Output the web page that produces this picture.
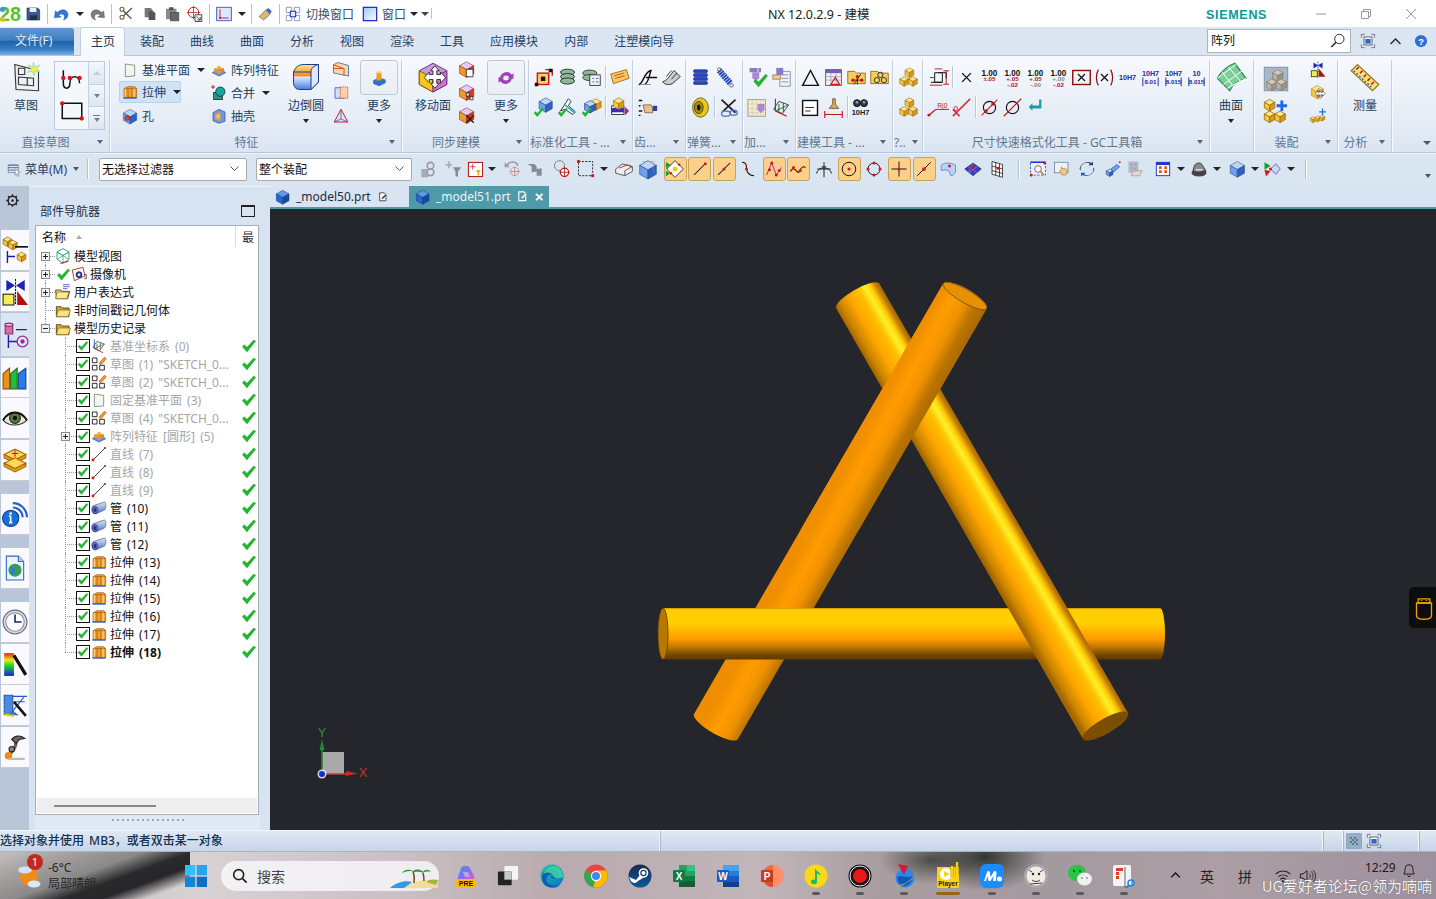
<!DOCTYPE html>
<html lang="zh">
<head>
<meta charset="utf-8">
<title>NX 12</title>
<style>
  html, body { margin: 0; height: 100%; overflow: hidden; background: #dce6f3; }
  body { font: 12px "Noto Sans", "Noto Sans CJK SC", sans-serif; color: #24405f; }
</style>
</head>
<body>
<nx-app>
  <nx-titlebar></nx-titlebar>
  <nx-tabs></nx-tabs>
  <nx-ribbon>
    <nx-group w="110" label="直接草图">
      <nx-big w="52" icon="sketch" label="草图"></nx-big>
      <nx-gallery></nx-gallery>
    </nx-group>
    <nx-group w="292" label="特征" pad="9">
      <nx-stack w="89">
        <nx-tool icon="datum" label="基准平面" caret></nx-tool>
        <nx-tool icon="extrude" label="拉伸" caret hl></nx-tool>
        <nx-tool icon="hole" label="孔"></nx-tool>
      </nx-stack>
      <nx-stack w="80">
        <nx-tool icon="pattern" label="阵列特征"></nx-tool>
        <nx-tool icon="unite" label="合并" caret></nx-tool>
        <nx-tool icon="shell" label="抽壳"></nx-tool>
      </nx-stack>
      <nx-big w="36" icon="blend" label="边倒圆" caret></nx-big>
      <nx-stack w="24" gapl="5">
        <nx-tool icon="chamfer"></nx-tool>
        <nx-tool icon="trim"></nx-tool>
        <nx-tool icon="draft"></nx-tool>
      </nx-stack>
      <nx-big w="38" gapl="7" boxed icon="moreA" label="更多" caret></nx-big>
    </nx-group>
    <nx-group w="127" label="同步建模" pad="13">
      <nx-big w="36" icon="moveface" label="移动面"></nx-big>
      <nx-stack w="24" gapl="4">
        <nx-tool icon="syncA"></nx-tool>
        <nx-tool icon="syncB"></nx-tool>
        <nx-tool icon="syncC"></nx-tool>
      </nx-stack>
      <nx-big w="38" gapl="8" boxed icon="moreB" label="更多" caret></nx-big>
    </nx-group>
    <nx-group w="104" label="标准化工具 - ..." left><nx-rows pad="2" a="stdA stdB stdC | tag" b="blueChk toolChk cubeChk | stdD"></nx-rows></nx-group>
    <nx-group w="53" label="齿..." left><nx-rows pad="2" a="gearA gearB" b="gearC"></nx-rows></nx-group>
    <nx-group w="57" label="弹簧..." left><nx-rows pad="2" a="coil spring" b="washer | cutter"></nx-rows></nx-group>
    <nx-group w="53" label="加..." left><nx-rows pad="2" a="addChk addDoc" b="addGrid csys"></nx-rows></nx-group>
    <nx-group w="97" label="建模工具 - ..." left><nx-rows pad="3" cell="23" a="triangle tableTri folderDots folderCirc" b="note brush | bino"></nx-rows></nx-group>
    <nx-group w="30" label="?.." left narrow><nx-rows pad="3" a="cubes" b="cubes"></nx-rows></nx-group>
    <nx-group w="287" label="尺寸快速格式化工具 - GC工具箱"><nx-rows pad="4" cell="23" sep="5" a="dimStep | crossX dimA dimB dimC dimD boxX parenX fitA fitB fitC fitD" b="dimRed dimSlash | diaA diaB back"></nx-rows></nx-group>
    <nx-group w="44" nolabel><nx-big w="42" icon="surface" label="曲面" caret></nx-big></nx-group>
    <nx-group w="84" label="装配">
      <nx-stack w="44" rowh="32" size="28" top="7">
        <nx-tool icon="greyCube" big></nx-tool>
        <nx-tool icon="cubesPlus" big></nx-tool>
      </nx-stack>
      <nx-stack w="24" gapl="8">
        <nx-tool icon="constraint"></nx-tool>
        <nx-tool icon="moveCube"></nx-tool>
        <nx-tool icon="smallPlus"></nx-tool>
      </nx-stack>
    </nx-group>
    <nx-group w="54" label="分析"><nx-big w="54" icon="ruler" label="测量"></nx-big></nx-group>
  </nx-ribbon>
  <nx-selbar></nx-selbar>
  <nx-workspace>
    <nx-resbar></nx-resbar>
    <nx-navigator>
      <nx-tree-row top first icon="modelView" exp="+" label="模型视图"></nx-tree-row>
      <nx-tree-row top icon="camera" exp="+" pre label="摄像机"></nx-tree-row>
      <nx-tree-row top icon="folderList" exp="+" label="用户表达式"></nx-tree-row>
      <nx-tree-row top icon="folder" exp="" label="非时间戳记几何体"></nx-tree-row>
      <nx-tree-row top icon="folder" exp="-" label="模型历史记录"></nx-tree-row>
      <nx-tree-row icon="csys" dim label="基准坐标系 (0)"></nx-tree-row>
      <nx-tree-row icon="sketchSm" dim label="草图 (1) &quot;SKETCH_0..."></nx-tree-row>
      <nx-tree-row icon="sketchSm" dim label="草图 (2) &quot;SKETCH_0..."></nx-tree-row>
      <nx-tree-row icon="datum" dim label="固定基准平面 (3)"></nx-tree-row>
      <nx-tree-row icon="sketchSm" dim label="草图 (4) &quot;SKETCH_0..."></nx-tree-row>
      <nx-tree-row icon="pattern" dim exp="+" label="阵列特征 [圆形] (5)"></nx-tree-row>
      <nx-tree-row icon="line" dim label="直线 (7)"></nx-tree-row>
      <nx-tree-row icon="line" dim label="直线 (8)"></nx-tree-row>
      <nx-tree-row icon="line" dim label="直线 (9)"></nx-tree-row>
      <nx-tree-row icon="tube" label="管 (10)"></nx-tree-row>
      <nx-tree-row icon="tube" label="管 (11)"></nx-tree-row>
      <nx-tree-row icon="tube" label="管 (12)"></nx-tree-row>
      <nx-tree-row icon="extrude" label="拉伸 (13)"></nx-tree-row>
      <nx-tree-row icon="extrude" label="拉伸 (14)"></nx-tree-row>
      <nx-tree-row icon="extrude" label="拉伸 (15)"></nx-tree-row>
      <nx-tree-row icon="extrude" label="拉伸 (16)"></nx-tree-row>
      <nx-tree-row icon="extrude" label="拉伸 (17)"></nx-tree-row>
      <nx-tree-row icon="extrude" bold last label="拉伸 (18)"></nx-tree-row>
    </nx-navigator>
    <nx-main></nx-main>
  </nx-workspace>
  <nx-status></nx-status>
  <nx-taskbar></nx-taskbar>
</nx-app>

<script>
// cube drawn from three faces, used by most of the assembly icons
const cube = (x, y, s, t = '#ffe88c', l = '#f7c63c', r = '#d9981a', st = '#9a6c10') =>
  `<g stroke="${st}" stroke-width=".7" stroke-linejoin="round"><path d="M${x} ${y + s * .28}L${x + s * .5} ${y}L${x + s} ${y + s * .28}L${x + s * .5} ${y + s * .56}Z" fill="${t}"/><path d="M${x} ${y + s * .28}L${x + s * .5} ${y + s * .56}V${y + s * 1.1}L${x} ${y + s * .82}Z" fill="${l}"/><path d="M${x + s} ${y + s * .28}L${x + s * .5} ${y + s * .56}V${y + s * 1.1}L${x + s} ${y + s * .82}Z" fill="${r}"/></g>`;
const blue = (x, y, s) => cube(x, y, s, '#bcd6f8', '#6f9fe4', '#2f62c0', '#24468c');
const chk = (x = 0, y = 0, k = 1) =>
  `<path transform="translate(${x} ${y}) scale(${k})" d="M2 13l3-3 4 4 10-11 3 2-13 16z" fill="#1fb82e" stroke="#128a1e" stroke-width=".5"/>`;
const reddot = (x, y, r = 2) => `<circle cx="${x}" cy="${y}" r="${r}" fill="#d8141c"/>`;
const T = (x, y, s, c, v, w = 700) =>
  `<text x="${x}" y="${y}" font-size="${s}" fill="${c}" font-weight="${w}" text-anchor="middle" font-family="'Liberation Sans',sans-serif">${v}</text>`;
const fitIcon = (a, b, c) => T(12, 10, 7.5, '#1c2aa8', a) + (b ? `<path d="M4 12v9M20 12v9" stroke="#1c2aa8"/>` + T(12, 19, 6.5, '#1c2aa8', b) : '') + (c || '');
const dim = (lo, col) => T(12, 10, 8.5, '#111', '1.00') + lo.map((v, i) => T(12, 16 + i * 6, 6.5, i ? col[1] : col[0], v)).join('');

const ICONS = {
  logo: `<text x="0" y="20" font-size="22" font-weight="700" fill="#5cc02c" font-family="'Liberation Sans',sans-serif" textLength="24" lengthAdjust="spacingAndGlyphs">28</text><circle cx="4" cy="7" r="3" fill="#2a8ee0" opacity=".8"/><circle cx="4" cy="18" r="3" fill="#e8c820" opacity=".8"/>`,
  save: `<path d="M3 3h16l3 3v15H3z" fill="#3d5a8c" stroke="#1c2c50"/><path d="M7 3h10v6H7z" fill="#e8eef8"/><path d="M7 14h11v7H7z" fill="#20304f"/>`,
  undo: `<path d="M6 10c5-6 14-4 14 3 0 4-3 6-6 7 2-3 2-8-3-8-2 0-3 1-3 2l3 2-9 1 1-9z" fill="#2f7ad8" stroke="#1b4d94" stroke-width=".6"/>`,
  redo: `<path d="M18 10C13 4 4 6 4 13c0 4 3 6 6 7-2-3-2-8 3-8 2 0 3 1 3 2l-3 2 9 1-1-9z" fill="#7c7c7c" stroke="#555" stroke-width=".6"/>`,
  cut: `<path d="M21 3L8 15M20 19L8 7" stroke="#555" stroke-width="2"/><circle cx="6" cy="5" r="3" fill="none" stroke="#7a5a30" stroke-width="1.6"/><circle cx="6" cy="17" r="3" fill="none" stroke="#7a5a30" stroke-width="1.6"/>`,
  copy: `<path d="M4 3h9l3 3v11H4z" fill="#777"/><path d="M10 8h7l3 3v10H10z" fill="#555"/>`,
  paste: `<path d="M4 5h14v14H4z" fill="#8a8a8a"/><path d="M8 3h6v4H8z" fill="#555"/><path d="M10 10h11v11H10z" fill="#666" stroke="#444"/>`,
  target: `<circle cx="10" cy="10" r="7" fill="none" stroke="#c01818" stroke-width="1.3"/><path d="M10 1v18M1 10h18" stroke="#c01818"/><path d="M12 13h9v9h-9z" fill="#fff" stroke="#111"/><path d="M14 15l5 5m0-4v4h-4" fill="none" stroke="#111"/>`,
  csysBox: `<rect x="1" y="2" width="22" height="20" fill="#dfe8fa" stroke="#4a5fc8" stroke-width="1.5"/><path d="M6 5v13h13" fill="none" stroke="#c01818" stroke-width="1.3"/><circle cx="6" cy="18" r="1.6" fill="#c01818"/>`,
  eraser: `<path d="M3 16L13 6l7 6-10 9z" fill="#d9b877" stroke="#7a6236"/><path d="M13 6l4-3 5 5-2 4z" fill="#3a66c8"/>`,
  switchWin: `<path d="M2 2h8v8H2zM14 2h8v8h-8zM2 14h8v8H2zM14 14h8v8h-8z" fill="#fff" stroke="#7a8696" stroke-width="1.2"/><path d="M8 8h8v8H8z" fill="#e8eef8" stroke="#1a34d0" stroke-width="1.6"/>`,
  winBox: `<defs><linearGradient id="w" x1="0" y1="0" x2="1" y2="1"><stop offset="0" stop-color="#9fc6ee"/><stop offset="1" stop-color="#fff"/></linearGradient></defs><rect x="2" y="2" width="20" height="20" fill="url(#w)" stroke="#1424d8" stroke-width="1.8"/>`,
  sketch: `<path d="M3 2l19 5v16L4 22z" fill="#eef1f4" stroke="#333" stroke-width=".9"/><path d="M6 5h5v5H6zM6 12l12 1v6l-12-1zM13 13v6" fill="none" stroke="#333" stroke-width=".9"/><path d="M18 0l1.2 4 4-1.6-2.6 3.2 2.8 2.6-4-.7-1 3.6-1.4-3.6-3.6.7 2.6-2.6-2.4-3.2 3.6 1.6z" fill="#f4f03a" stroke="#7bd0e8" stroke-width=".5"/>`,
  curve: `<path d="M4 4v12c0 6 6 6 6 0 0-8 9-8 9 0" fill="none" stroke="#111" stroke-width="1.4"/>` + reddot(4, 11) + reddot(10, 11) + reddot(19, 11),
  rect: `<path d="M3 4h18v14H3z" fill="none" stroke="#111" stroke-width="1.4"/>` + reddot(3, 4) + reddot(21, 18),
  datum: `<path d="M5 3l14 2v16L5 22z" fill="#f2f6ee" stroke="#5a6a5a"/>`,
  extrude: `<path d="M3 7l6-3h10l3 3v13H3z" fill="#f0a030" stroke="#a05208"/><path d="M3 7h19M9 7v13M15 7v13" stroke="#a05208"/><path d="M5 7v13M18 7v13" stroke="#ffd27a" stroke-width="2"/><path d="M2 21h20" stroke="#2a52b8" stroke-width="2"/>`,
  hole: blue(2, 2, 20) + `<circle cx="8" cy="15" r="3.5" fill="#e8402a" stroke="#7a1a10"/>`,
  pattern: `<path d="M2 16l10-6 10 6-10 5z" fill="#6d96dc" stroke="#2a4c98"/><circle cx="7" cy="12" r="3" fill="#f09a28"/><circle cx="12" cy="9" r="3" fill="#f0a838"/><circle cx="17" cy="12" r="3" fill="#e88a18"/><circle cx="12" cy="15" r="3" fill="#f09a28"/>`,
  unite: `<rect x="4" y="11" width="13" height="11" fill="#1d9a8e" stroke="#111"/><circle cx="14" cy="10" r="7" fill="#1aa49a" stroke="#111"/><path d="M0 3h6M3 0v6" stroke="#d81818" stroke-width="1.5"/>`,
  shell: `<path d="M3 7l9-5 9 4v14l-9 3-9-4z" fill="#6d96dc" stroke="#2a4c98"/><path d="M6 9l8-3v14l-8-3z" fill="#f09a28"/><path d="M8 10l6 6M8 15l6-5" stroke="#fff"/>`,
  blend: `<defs><linearGradient id="b" x1="0" y1="0" x2="0" y2="1"><stop offset="0" stop-color="#ffe98a"/><stop offset=".45" stop-color="#f08a20"/><stop offset=".5" stop-color="#dfe9fb"/><stop offset="1" stop-color="#4a7be0"/></linearGradient></defs><path d="M2 8c2-5 5-6 9-6l11 0v14l-6 6H7c-3 0-5-2-5-6z" fill="url(#b)" stroke="#1d3c90" stroke-width=".8"/><path d="M16 22V8c0-3 2-5 6-6v14z" fill="#dde7f8" stroke="#1d3c90" stroke-width=".8"/><path d="M2 8c4 0 10 0 14 0" stroke="#1d3c90" stroke-width=".8"/>`,
  chamfer: `<path d="M2 5l6-3 14 4v14l-20-4z" fill="#ffd8a8" stroke="#1d5ac0"/><path d="M2 10h14M2 5l14 5v10" fill="none" stroke="#e05818" stroke-width="1.4"/>`,
  trim: `<path d="M4 5h13v14H4z" fill="#cfe0fa" stroke="#2a52c8"/><path d="M11 4h10v15H11z" fill="#fbd2a8" stroke="#d83818" stroke-dasharray="2 1"/>`,
  draft: `<path d="M12 3L3 20h18z" fill="#d9e6fb" stroke="#d81818" stroke-width="1.3"/><path d="M3 20l9-4 9 4M12 3v13" fill="none" stroke="#2a52c8"/>`,
  moreA: `<path d="M5 15l7-4 8 3v4l-8 4-7-3z" fill="#2f6fc8"/><path d="M9 15h6V5H9z" fill="#f09a28"/><ellipse cx="12" cy="5" rx="3" ry="1.5" fill="#ffd27a"/>`,
  moreB: `<path d="M5 11a8 8 0 0 1 14-3l2-2v7h-7l2-2a5 5 0 0 0-8 0zM19 13a8 8 0 0 1-14 3l-2 2v-7h7l-2 2a5 5 0 0 0 8 0z" fill="#a040b8"/>`,
  moveface: `<path d="M12 1l11 6v11l-11 6-11-6V7z" fill="#c89ad8" stroke="#6a3a90" stroke-width=".8"/><path d="M1 7l11 6v11l-11-6z" fill="#f6c618" stroke="#8a5a10" stroke-width=".8"/><path d="M12 13l11-6v11l-11 6z" fill="#d870c8" stroke="#6a3a90" stroke-width=".8"/><path d="M15 7v3h3V8l4 4.500-4 4.500v-3h-3v3h2l-3.500 4-3.500-4h2v-3h-3v2.500L5 12.500 9 8v2h3V7h-2l3.500-4 3.500 4z" fill="#fff" stroke="#222" stroke-width=".7"/>`,
  syncA: cube(2, 1, 19, '#e8c8f4', '#f09a28', '#d8381a', '#7a2a10') + `<path d="M11 11h9v10h-9z" fill="#fff" stroke="#111"/>`,
  syncB: cube(2, 1, 19, '#e8c8f4', '#f09a28', '#d8381a', '#7a2a10') + `<path d="M11 12h4v4h-4zM16 17h4v4h-4z" fill="#fff" stroke="#111"/>`,
  syncC: cube(2, 1, 19, '#e8c8f4', '#f09a28', '#d8381a', '#7a2a10') + `<path d="M11 11l10 10M21 11L11 21" stroke="#222" stroke-width="1.8"/>`,
  stdA: `<rect x="5" y="7" width="13" height="13" fill="#ffd060" stroke="#c01818" stroke-width="1.6"/><rect x="9" y="11" width="5" height="5" fill="#111"/><path d="M14 3h8v7" fill="none" stroke="#c01818" stroke-width="1.6"/><rect x="2" y="18" width="4" height="4" fill="#111"/><rect x="18" y="2" width="4" height="4" fill="#111"/>`,
  stdB: `<ellipse cx="12" cy="6" rx="8" ry="3.500" fill="#8fb89a" stroke="#222"/><ellipse cx="12" cy="11" rx="8" ry="3.500" fill="#8fb89a" stroke="#222"/><ellipse cx="12" cy="16" rx="8" ry="3.500" fill="#8fb89a" stroke="#222"/>`,
  stdC: `<ellipse cx="10" cy="7" rx="8" ry="3.500" fill="#8fb89a" stroke="#333"/><ellipse cx="10" cy="12" rx="8" ry="3.500" fill="#8fb89a" stroke="#333"/><rect x="10" y="9" width="12" height="12" fill="#eef3fa" stroke="#333"/><path d="M13 13h2M17 13h3M13 17h2M17 17h3" stroke="#2a52c8"/>`,
  tag: `<path d="M2 8l18-5 3 10-18 6z" fill="#f6c860" stroke="#a06818"/><path d="M6 10l11-3M7 13l11-3" stroke="#c04818"/>`,
  blueChk: blue(7, 1, 15) + chk(0, 11, .55),
  toolChk: `<path d="M4 16L13 2l3 3-3 5 8 7-3 3-9-6z" fill="#fff" stroke="#222"/><path d="M9 9l11 9" stroke="#28b8d8" stroke-width="2"/>` + chk(0, 11, .55),
  cubeChk: cube(11, 2, 12, '#ffe88c', '#f7a63c', '#f09018') + blue(4, 4, 13) + chk(0, 11, .55),
  stdD: `<path d="M3 10h14v10H3z" fill="#fff" stroke="#222"/><path d="M3 15h14" stroke="#3b2bb8" stroke-width="5"/>` + cube(5, 1, 12) + `<path d="M18 11l5 5-5 5z" fill="#a020a0"/>`,
  gearA: `<path d="M2 20C7 20 8 5 16 4c-2 5-2 12-7 16M10 12h13" fill="none" stroke="#111" stroke-width="1.6"/><path d="M4 20h12" stroke="#888"/>`,
  gearB: `<path d="M2 17c6-2 9-9 13-13l7 7-9 8c-4 2-9 1-11-2z" fill="#ccc" stroke="#222"/><path d="M6 11l6-7M12 14l6-7" stroke="#222"/>`,
  gearC: `<path d="M2 10h2M2 4h4M2 16h4M2 21h2" stroke="#111" stroke-width="1.6"/><path d="M7 9h9l2 4v5H9z" fill="#e8c088" stroke="#8a6238"/><path d="M18 10h5v6h-5z" fill="#2a3ea8"/>`,
  coil: `<g fill="#2446c8" stroke="#0e1e70" stroke-width=".6"><rect x="4" y="3" width="16" height="3.500" rx="1.500"/><rect x="4" y="7.500" width="16" height="3.500" rx="1.500"/><rect x="4" y="12" width="16" height="3.500" rx="1.500"/><rect x="4" y="16.500" width="16" height="3.500" rx="1.500"/></g>`,
  spring: `<path d="M6 4l13 15" stroke="#1b3fb0" stroke-width="7" stroke-dasharray="2 .8"/><circle cx="6" cy="3" r="2" fill="none" stroke="#555"/><circle cx="20" cy="21" r="2" fill="none" stroke="#555"/>`,
  washer: `<ellipse cx="12" cy="12" rx="9" ry="11" fill="#e8c818" stroke="#6a5a08"/><ellipse cx="10" cy="12" rx="5" ry="7" fill="#a88e10" stroke="#443808"/><ellipse cx="10" cy="12" rx="2" ry="3.500" fill="#111"/>`,
  cutter: `<path d="M4 3l16 15M20 3L5 17" stroke="#222" stroke-width="2"/><ellipse cx="9" cy="19" rx="5" ry="3" fill="none" stroke="#5a7ac8" stroke-width="1.6"/><ellipse cx="18" cy="18" rx="4" ry="3" fill="none" stroke="#5a7ac8" stroke-width="1.6"/>`,
  addChk: `<path d="M3 1h9v5H3zM13 1h3v5h-3z" fill="#8a7ac8"/><path d="M6 6h8v7l-4 2-4-2z" fill="#a888d0"/>` + chk(6, 6, .8),
  addDoc: `<path d="M10 5h12v17H10z" fill="#eef3fa" stroke="#889"/><path d="M12 9h8M12 13h8M12 17h8" stroke="#88a"/><path d="M2 9h9v5H2z" fill="#f0d080" stroke="#987"/><path d="M6 1h8v8H6z" fill="#8a7ac8"/>`,
  addGrid: `<rect x="1" y="3" width="20" height="19" fill="#f4ecc0" stroke="#999"/><path d="M1 8h20M1 13h20M1 18h20M6 3v19M11 3v19M16 3v19" stroke="#bbb" stroke-dasharray="1 1"/><path d="M12 8h8v7l-4 3-4-3z" fill="#a888d0"/>`,
  csys: `<path d="M3 14L9 5l11 4-7 10z" fill="none" stroke="#333"/><path d="M5 2v14" stroke="#1a34d0" stroke-width="1.2"/><path d="M5 16l15-7" stroke="#18a020" stroke-width="1.2"/><path d="M5 16l13 6" stroke="#c01818" stroke-width="1.2"/><path d="M9 8v8M14 7v10" stroke="#333"/>`,
  triangle: `<path d="M12 4L3 21h18z" fill="none" stroke="#111" stroke-width="1.6"/>`,
  tableTri: `<rect x="3" y="3" width="18" height="18" fill="#eef1fa" stroke="#555"/><path d="M3 3h18v4H3z" fill="#7a5ac0"/><path d="M3 11h18M3 15h18M9 7v14M15 7v14" stroke="#aaa"/><path d="M14 12l-5 8h10z" fill="none" stroke="#d81818" stroke-width="1.5"/>`,
  folderDots: `<path d="M2 5h8l2 2h10v12H2z" fill="#f2d060" stroke="#8a6a18"/><path d="M7 15h12M13 10v10M17 8l-8 12" stroke="#222"/>` + reddot(8, 15) + reddot(18, 15) + reddot(13, 11),
  folderCirc: `<path d="M2 5h8l2 2h10v12H2z" fill="#f2d060" stroke="#8a6a18"/><circle cx="9" cy="15" r="3" fill="none" stroke="#222"/><circle cx="17" cy="15" r="3" fill="none" stroke="#222"/><circle cx="13" cy="9" r="3" fill="none" stroke="#222"/>`,
  note: `<rect x="3" y="4" width="17" height="17" fill="#fff" stroke="#111" stroke-width="1.6"/><path d="M6 12h10M6 16h6" stroke="#111"/>`,
  brush: `<path d="M11 2h3v6l4 5H7l4-5z" fill="#d9a860" stroke="#7a5a20"/><path d="M2 20h20M2 16v8M22 16v8" stroke="#c01818" stroke-width="1.3"/>`,
  bino: `<circle cx="8" cy="7" r="4" fill="#334" stroke="#111"/><circle cx="16" cy="7" r="4" fill="#334" stroke="#111"/><circle cx="8" cy="6" r="1.500" fill="#6ad"/><circle cx="16" cy="6" r="1.500" fill="#6ad"/>` + T(12, 21, 8.5, '#222', '10H7'),
  cubes: cube(8, 1, 10) + cube(2, 11, 10) + cube(12, 11, 10),
  dimStep: `<path d="M8 7v10h8V7zM4 17h12" fill="none" stroke="#111"/><path d="M8 3h8M3 20h13M3 12h5M20 5v14M17 5h6M17 19h6" stroke="#c01818"/><path d="M12 7h8v6" fill="none" stroke="#111"/>`,
  crossX: `<path d="M7 7l10 10M17 7L7 17" stroke="#111" stroke-width="1.6"/>`,
  dimA: dim(['±.05'], ['#b01818']),
  dimB: dim(['+.05', '-.02'], ['#b01818', '#b01818']),
  dimC: dim(['+.05', '-.00'], ['#b01818', '#888']),
  dimD: dim(['+.00', '-.02'], ['#888', '#b01818']),
  boxX: `<rect x="2" y="4" width="20" height="16" fill="none" stroke="#8a1010" stroke-width="1.6"/><path d="M8 8l8 8M16 8l-8 8" stroke="#111" stroke-width="1.4"/>`,
  parenX: `<path d="M5 3c-3 5-3 13 0 18M19 3c3 5 3 13 0 18" fill="none" stroke="#8a1010" stroke-width="1.4"/><path d="M8 8l8 8M16 8l-8 8" stroke="#111" stroke-width="1.4"/>`,
  fitA: T(12, 15, 7.5, '#1c2aa8', '10H7'),
  fitB: fitIcon('10H7', '8.01'),
  fitC: fitIcon('10H7', '8.015'),
  fitD: fitIcon('10', '8.015'),
  dimRed: `<path d="M2 20l7-6" stroke="#c01818" stroke-width="1.3"/><circle cx="2" cy="20" r="1.500" fill="#c01818"/><path d="M9 14h14" stroke="#c01818"/>` + T(16, 12, 7, '#c01818', 'R|0', 400),
  dimSlash: `<path d="M3 21L21 3M3 14l7 7" stroke="#d83030" stroke-width="1.600"/><circle cx="6" cy="13" r="2" fill="none" stroke="#d83030"/>`,
  diaA: `<circle cx="12" cy="12" r="7" fill="none" stroke="#111" stroke-width="1.300"/><path d="M3 21L21 3" stroke="#c01818" stroke-width="1.300"/>` + reddot(8, 16) + reddot(16, 8),
  diaB: `<circle cx="12" cy="12" r="7" fill="none" stroke="#111" stroke-width="1.300"/><path d="M2 22L22 2" stroke="#c01818" stroke-width="1.300"/>`,
  back: `<path d="M19 7v8H10v-3l-5 5 5 5v-3h12V7z" transform="translate(0 -3) scale(.85)" fill="#1b9aa8"/>`,
  surface: `<path d="M1 13C6 5 12 2 15 1l9 12c-4 1-10 4-13 10z" fill="#7ccf9a" stroke="#2a8a50"/><path d="M5 8l10 13M10 4l10 12M1 13L16 2M6 18L21 7M9 21L24 13" fill="none" stroke="#fff" stroke-width=".8"/>`,
  greyCube: `<rect x="2" y="2" width="20" height="20" fill="#a8b8cc" stroke="#8a9ab0"/>` + cube(9, 4, 9, '#cfcabc', '#b8b0a0', '#9a9488', '#8a8478') + cube(4, 12, 9, '#cfcabc', '#b8b0a0', '#9a9488', '#8a8478') + cube(12, 12, 9, '#cfcabc', '#b8b0a0', '#9a9488', '#8a8478'),
  cubesPlus: cube(2, 2, 9) + cube(2, 12, 9) + cube(11, 12, 9) + `<path d="M17 3v9M12.500 7.500h9" stroke="#1a6ae8" stroke-width="2.400"/>`,
  constraint: `<rect x="3" y="13" width="8" height="8" fill="#f6ee50" stroke="#222"/><path d="M13 21V10l9 11z" fill="#b01010"/><path d="M12 1v22" stroke="#111" stroke-dasharray="2 1"/><path d="M6 2l6 4-6 4zM18 2l-6 4 6 4z" fill="#1a22b8"/>`,
  moveCube: cube(3, 2, 16, '#ffe88c', '#f7c63c', '#f0a820', '#b87a10') + `<path d="M15 10v3h3v-2l4 4-4 4v-2h-3v3h2l-3 3-3-3h2v-3h-3v2l-4-4 4-4v2h3v-3H9l3-3 3 3z" transform="translate(3 0) scale(.85)" fill="#fff" stroke="#222" stroke-width=".8"/>`,
  smallPlus: cube(2, 13, 7) + cube(8, 12, 7) + cube(14, 11, 7) + `<path d="M18 2v9M13.500 6.500h9" stroke="#1a6ae8" stroke-width="1.600"/>`,
  ruler: `<path d="M1 7l5-5 17 16-5 5z" fill="#f6e07a" stroke="#8a7a28"/><path d="M5 6l2-2M8 9l2-2M11 12l2-2M14 15l2-2M17 18l2-2" stroke="#c01818" stroke-width="1.300"/><path d="M3 7l14 13" stroke="#2a52c8" stroke-dasharray="1.500 1.500"/>`,
  menu: `<path d="M2 5h16M2 9h16M2 13h10" stroke="#4a5a70" stroke-width="1.300"/><path d="M2 5h16v12H2z" fill="none" stroke="#4a6a9a"/><path d="M13 11l8 6-4 1 2 4-2 1-2-4-2 2z" fill="#fff" stroke="#333" stroke-width=".7"/>`,
  selA: `<path d="M4 12h8v10H4z" fill="#aab"/><circle cx="15" cy="8" r="4" fill="none" stroke="#99a" stroke-width="2"/><circle cx="15" cy="16" r="4" fill="none" stroke="#99a" stroke-width="2"/>`,
  selB: `<path d="M3 7h8M7 3v8" stroke="#aab" stroke-width="2"/><path d="M12 10h10l-4 5v6h-3v-6z" fill="#889"/>`,
  selC: `<rect x="2" y="2" width="20" height="20" fill="#fff" stroke="#b01010" stroke-width="1.400"/><path d="M8 4v8M4 8h8" stroke="#c01818"/><path d="M12 13h8l-3 3v4h-2v-4z" fill="#e0a018"/>`,
  selD: `<path d="M5 8a7 7 0 0 1 13 0" fill="none" stroke="#99a" stroke-width="2"/><path d="M2 4v6h6z" fill="#99a"/><circle cx="14" cy="15" r="5" fill="none" stroke="#d08888"/><path d="M14 9v12M8 15h12" stroke="#b88"/>`,
  selE: `<path d="M3 6h8l3 3v3l6-1v9h-6v-5l-6 1V9z" fill="#889"/>`,
  selF: `<circle cx="9" cy="8" r="6" fill="none" stroke="#333" stroke-dasharray="2 1"/><circle cx="15" cy="16" r="5" fill="#fff" stroke="#c01818" stroke-width="1.400"/><path d="M15 10v12M9 16h12" stroke="#c01818"/>`,
  selG: `<rect x="3" y="3" width="17" height="17" fill="none" stroke="#111" stroke-dasharray="2.500 1.500"/>` + reddot(3, 3) + reddot(20, 20),
  selH: `<path d="M2 12l8-6 12 3v6l-9 5-11-3z" fill="#eee" stroke="#444"/><path d="M6 11l10-4 5 2" fill="none" stroke="#c01818"/><path d="M13 20v-6l9-5" fill="none" stroke="#444"/>`,
  selI: blue(2, 2, 20) + `<path d="M6 3h13v14" fill="none" stroke="#d86888" stroke-dasharray="1.500 1"/>`,
  snapA: `<path d="M12 2l10 10-10 10L2 12z" fill="#fff" stroke="#222"/><circle cx="12" cy="12" r="3" fill="#f6c618"/>` + reddot(17, 7, 1.500) + reddot(7, 17, 1.500) + `<path d="M1 4l6 3-6 4zM1 14l5 3-5 4z" fill="#18a020"/>`,
  snapB: `<path d="M4 20L19 5" stroke="#111" stroke-width="1.400"/>` + reddot(19, 5),
  snapC: `<path d="M4 20L20 4" stroke="#111" stroke-width="1.400"/>` + reddot(12, 12),
  snapD: `<path d="M4 3c7 0 6 7 6 9s2 9 10 9" fill="none" stroke="#111" stroke-width="1.400"/>` + reddot(10, 12),
  snapE: `<path d="M2 20L9 4l6 16 7-10" fill="none" stroke="#c03aa0" stroke-width="1.400"/>` + reddot(9, 4) + reddot(6, 13) + reddot(15, 20) + reddot(19, 14),
  snapF: `<path d="M2 15c5-10 9 6 12 0s5-7 8-5" fill="none" stroke="#111" stroke-width="1.400"/><path d="M2 15c5-10 9 6 12 0" fill="none" stroke="#c01818" stroke-width="1.400"/>` + reddot(6, 10) + reddot(15, 14),
  snapG: `<path d="M2 18C4 8 20 8 22 18M12 3v20M3 12h18" fill="none" stroke="#111" stroke-width="1.200"/><path d="M9 9h6" stroke="#111"/>`,
  snapH: `<circle cx="12" cy="12" r="9" fill="none" stroke="#111" stroke-width="1.300"/>` + reddot(12, 12),
  snapI: `<circle cx="12" cy="12" r="8" fill="none" stroke="#111" stroke-width="1.300"/>` + reddot(12, 4) + reddot(12, 20) + reddot(4, 12) + reddot(20, 12),
  snapJ: `<path d="M12 2v20M2 12h20" stroke="#111" stroke-width="1.300"/>` + reddot(12, 12),
  snapK: `<path d="M3 21L21 3" stroke="#111" stroke-width="1.300"/>` + reddot(12, 12, 2.500),
  snapL: `<path d="M3 7c5-4 12-4 19 0v9c-2 3-4 5-6 5l-3-7c-3-1-7-1-10 0z" fill="#b8d4f4" stroke="#4a7ac8"/>` + reddot(14, 8),
  snapM: `<path d="M1 12l11-8 11 8-11 9z" fill="#3a40c8" stroke="#111" stroke-width=".7"/><path d="M6 8l11 9M12 4l-6 13M18 8L7 17" stroke="#aab" stroke-width=".6"/>` + reddot(11, 10, 2.500),
  snapN: `<path d="M4 2l14 4v17L4 19z" fill="#fff" stroke="#111"/><path d="M4 8l14 4M4 14l14 4M9 3v17M14 5v17" stroke="#111"/>` + reddot(12, 11),
  viewA: `<rect x="2" y="3" width="20" height="17" fill="#eef1fa" stroke="#1a34d0" stroke-dasharray="3 2"/><path d="M2 3h20" stroke="#1a34d0" stroke-width="2"/><circle cx="12" cy="12" r="4.500" fill="#fff" stroke="#444"/><path d="M15 15l5 5" stroke="#b88018" stroke-width="2"/>` + reddot(3, 20) + reddot(21, 4),
  viewB: `<rect x="2" y="3" width="18" height="14" fill="#eef1fa" stroke="#6a7a98"/><path d="M12 20l-3-6 2-2v-3l2 3 2-1 2 1 2 1v3l-2 4z" fill="#f0c888" stroke="#b88838"/>`,
  viewC: `<path d="M4 14a8 8 0 0 1 12-9l-2 2h6v-5l-2 2A11 11 0 0 0 2 12z" fill="#333a60"/><path d="M20 10a8 8 0 0 1-12 9l2-2H4v5l2-2a11 11 0 0 0 16-8z" fill="#1a5ac0"/>`,
  viewD: blue(3, 12, 9) + `<path d="M9 12l8-6 4 3-8 7z" fill="#6f9fe4" stroke="#2f62c0"/>` + reddot(21, 3, 1.300),
  viewE: `<rect x="2" y="2" width="13" height="15" fill="#b0b8c4"/><path d="M5 6h2M10 6h2M5 11h2M10 11h2" stroke="#889"/><path d="M8 15l12-1-3 7H6z" fill="#ddd" stroke="#b88"/>`,
  viewF: `<rect x="2" y="2" width="20" height="20" fill="#fff" stroke="#1a34d0" stroke-width="1.400"/><path d="M2 2h20v4H2z" fill="#1a34d0"/><path d="M6 8h4v4H6zM14 8h4v4h-4zM6 14h4v4H6zM14 14h4v4h-4z" fill="#e8501a"/>`,
  viewG: `<ellipse cx="12" cy="17" rx="10" ry="5" fill="#444"/><path d="M4 15c1-8 3-11 8-11s5 5 9 10c-7 3-13 3-17 1z" fill="#888" stroke="#222"/><path d="M8 13h9" stroke="#eee" stroke-width="1.500"/>`,
  viewH: blue(3, 2, 19),
  viewI: `<path d="M10 12l7-7 6 7-6 7z" fill="#c8d8f4" stroke="#3a52b8"/><path d="M2 3l8 5-8 5z" fill="#18a020"/><path d="M2 13l8 2-6 7z" fill="#d81818"/><circle cx="10" cy="12" r="2" fill="#d81818"/>`,
  part: cube(2, 2, 19, '#5e9ce8', '#2467d0', '#164a9e', '#0f3a84'),
  editDoc: `<path d="M4 2h11l4 4v15H4z" fill="#fff" stroke="#333" stroke-width="2"/><path d="M9 14l9-9 3 3-9 9H9z" fill="#333" stroke="#fff"/>`,
  editDocW: `<path d="M4 2h11l4 4v15H4z" fill="#4e9aa8" stroke="#fff" stroke-width="2.400"/><path d="M9 14l9-9 3 3-9 9H9z" fill="#fff" stroke="#4e9aa8"/>`,
  gear: `<circle cx="12" cy="12" r="7" fill="none" stroke="#222" stroke-width="2.400"/><circle cx="12" cy="12" r="2" fill="#222"/><path d="M12 2v3M12 19v3M2 12h3M19 12h3M5 5l2 2M17 17l2 2M5 19l2-2M17 7l2-2" stroke="#222" stroke-width="2.400"/>`,
  resAsm: cube(1, 0, 8) + cube(6, 3, 8) + cube(14, 14, 8) + `<path d="M5 13v11M5 18h7M12 9h12" stroke="#1c1ca8" stroke-width="1.300"/><path d="M12 9h12" stroke="#111" stroke-width="1.300"/>`,
  resCon: `<rect x="1" y="14" width="10" height="10" fill="#f6ee50" stroke="#222"/><path d="M14 24V11l10 13z" fill="#b01010"/><path d="M12.500 0v24" stroke="#111" stroke-dasharray="2 1"/><path d="M4 1l8 5-8 5zM21 1l-8 5 8 5z" fill="#1a22b8"/>`,
  resPart: `<path d="M2 2h7v9H2z" fill="#d070a8" stroke="#8a2a70"/><ellipse cx="5.500" cy="2.500" rx="3.500" ry="1.500" fill="#f4b8d8" stroke="#8a2a70"/><path d="M5 12v12M5 18h8M12 7h10" stroke="#1c1ca8" stroke-width="1.300"/><circle cx="18" cy="18" r="5" fill="none" stroke="#a02a90" stroke-width="1.200"/><circle cx="18" cy="18" r="2" fill="#a02a90"/>`,
  resBooks: `<path d="M1 8l6-5v19H1z" fill="#f09018" stroke="#8a4a08"/><path d="M8 8l6-5v19H8z" fill="#2eb83a" stroke="#187020"/><path d="M15 8l7-5v19h-7z" fill="#2a7ae8" stroke="#14408a"/>`,
  resEye: `<path d="M1 14C6 6 17 5 23 14c-6 6-17 6-22 0z" fill="#e8e8d8" stroke="#333"/><circle cx="12" cy="12" r="5" fill="#5a7a3a" stroke="#222"/><circle cx="12" cy="12" r="2" fill="#111"/><path d="M1 14C6 5 17 4 23 14" fill="none" stroke="#111" stroke-width="1.800"/>`,
  resLayers: `<path d="M2 7l10-5 10 5-10 5z" fill="#ffd858" stroke="#a06c10"/><path d="M2 7v3l10 5 10-5V7l-10 5z" fill="#e8a010" stroke="#a06c10"/><path d="M2 15l10-5 10 5-10 5z" fill="#ffd858" stroke="#a06c10"/><path d="M2 15v3l10 5 10-5v-3l-10 5z" fill="#e8a010" stroke="#a06c10"/><path d="M9 6h6M12 3v6" stroke="#d81818"/>`,
  resInfo: `<path d="M10 2a13 13 0 0 1 13 13M10 6a9 9 0 0 1 9 9M10 10a5 5 0 0 1 5 5" fill="none" stroke="#2860d0" stroke-width="2"/><circle cx="8" cy="16" r="7.500" fill="#1a70d8" stroke="#0c4090"/><path d="M8 14v6M6.500 14h1.500M6.500 20h3" stroke="#fff" stroke-width="1.500"/><circle cx="8" cy="11.500" r="1.200" fill="#fff"/>`,
  resDoc: `<path d="M4 1h11l5 5v17H4z" fill="#eef4fe" stroke="#2a6ac8"/><path d="M15 1v5h5" fill="#bcd" stroke="#2a6ac8"/><circle cx="12" cy="14" r="6" fill="#3a9a58"/><path d="M8 11c3 0 4 2 4 4s-1 3-3 3z" fill="#2a7ae8"/>`,
  resClock: `<circle cx="12" cy="12" r="11" fill="#d8dce4" stroke="#667"/><circle cx="12" cy="12" r="8.500" fill="#fff" stroke="#88a"/><path d="M12 5v7h6" fill="none" stroke="#1a2a6a" stroke-width="1.500"/>`,
  resRainbow: `<defs><linearGradient id="r" x1="0" y1="0" x2="0" y2="1"><stop offset="0" stop-color="#e81818"/><stop offset=".3" stop-color="#f0e818"/><stop offset=".55" stop-color="#18d828"/><stop offset="1" stop-color="#1818e8"/></linearGradient></defs><rect x="2" y="2" width="9" height="21" fill="url(#r)"/><path d="M11 4l11 18" stroke="#111" stroke-width="3"/>`,
  resTool: `<path d="M2 3h8v15l4 3H2z" fill="#4a8ae0" stroke="#1a4a9a" stroke-dasharray="2 .5"/><path d="M10 4h13M12 9h9M8 20L20 5" stroke="#2a52c8"/><path d="M11 9l11 13" stroke="#111" stroke-width="2.400"/><path d="M2 21l9 1" stroke="#e8d018" stroke-width="2"/>`,
  resRobot: `<path d="M5 20c6-4 8-8 8-13" fill="none" stroke="#666" stroke-width="3"/><path d="M9 5c3-4 8-4 12-1l-5 1-3 4z" fill="#666" stroke="#222"/><circle cx="9" cy="14" r="2.500" fill="#888" stroke="#222"/><circle cx="6" cy="20" r="3.500" fill="#f08a18"/><path d="M6 23h15" stroke="#bbb" stroke-width="2"/>`,
  modelView: `<path d="M12 1l9 5v11l-9 6-9-6V6z" fill="#fff" stroke="#1a9a60" stroke-width="1.300"/><path d="M3 6l9 5 9-5M12 11v12M3 17l18-11M3 6l18 11" fill="none" stroke="#1a9a60"/><path d="M8 23l12-3" stroke="#d81818" stroke-width="1.500"/>`,
  camera: `<path d="M2 6l16-4 3 13-16 7z" fill="#fff" stroke="#c01818" stroke-width="1.300"/><circle cx="12" cy="13" r="4.500" fill="#2a4ad0" stroke="#111"/><circle cx="12" cy="13" r="1.800" fill="#fff"/><path d="M20 13h3v6h-3" fill="none" stroke="#111"/>`,
  folderList: `<path d="M1 9h8l2 2h11l-3 11H2z" fill="#f8d868" stroke="#111"/><path d="M3 12h18l-3 10H1z" fill="#fbe89a" stroke="#7a5a10"/><path d="M12 1h10M12 4h10M12 7h7" stroke="#1c1ca8"/>`,
  folder: `<path d="M2 7h7l2 2h10v13H2z" fill="#e0a820" stroke="#111"/><path d="M2 22l3-10h18l-3 10z" fill="#fbe080" stroke="#7a5a10"/>`,
  sketchSm: `<path d="M2 3h7v7H2zM2 14h7v7H2zM13 14h7v7h-7z" fill="#fff" stroke="#111" stroke-width="1.300"/><path d="M12 11l8-9 3 2-8 9z" fill="#f0a020" stroke="#b01010" stroke-width=".7"/>`,
  line: `<path d="M3 21L21 3" stroke="#222" stroke-width="1.300"/>` + reddot(3, 21, 2.200) + reddot(21, 3, 1.600),
  tube: `<defs><linearGradient id="t" x1="0" y1="0" x2="0" y2="1"><stop offset="0" stop-color="#dfe7f6"/><stop offset="1" stop-color="#4a70b8"/></linearGradient></defs><path d="M5 8L20 3c3 0 3 11 0 12L7 21c-8 0-7-13-2-13z" fill="url(#t)" stroke="#3a5a98"/><ellipse cx="6" cy="15" rx="4" ry="5.500" fill="#6a6ad0" stroke="#2a3a78"/><ellipse cx="6" cy="15" rx="2" ry="3" fill="#2a2a80"/>`,
  check: chk(),
  search: `<circle cx="14" cy="9" r="7" fill="#fff" stroke="#333" stroke-width="1.500"/><path d="M9 14l-7 7" stroke="#333" stroke-width="2.400"/>`,
  restore: `<path d="M2 7V2h5M17 2h5v5M22 17v5h-5M7 22H2v-5" fill="none" stroke="#667" stroke-width="1.300"/><rect x="6" y="6" width="12" height="12" fill="#fff" stroke="#223"/><rect x="8" y="9" width="8" height="7" fill="#2a6ac8"/>`,
  chevUp: `<path d="M4 16l8-8 8 8" fill="none" stroke="#222" stroke-width="2"/><path d="M7 19l5-5 5 5" fill="none" stroke="#aab" stroke-width="1"/>`,
  help: `<circle cx="12" cy="12" r="10.500" fill="#2f6fd8"/>` + `<text x="12" y="18" font-size="16" font-weight="700" fill="#fff" text-anchor="middle" font-family="'Liberation Sans',sans-serif">?</text>`,
  checker: `<rect x="1" y="1" width="22" height="22" fill="#94aec6" stroke="#7f9ab4"/><path d="M6 6h3v3H6zM12 6h3v3h-3zM9 9h3v3H9zM15 9h3v3h-3zM6 12h3v3H6zM12 12h3v3h-3zM9 15h3v3H9zM15 15h3v3h-3z" fill="#5a7a98"/>`,
  usb: `<path d="M5 6h14v-5H5z" fill="none" stroke="#f0a000" stroke-width="1.600"/><path d="M8 3h2M14 3h2" stroke="#f0a000"/><path d="M3 6h18v15c0 6-18 6-18 0z" fill="none" stroke="#f0a000" stroke-width="1.600"/>`,
  weather: `<circle cx="12" cy="13" r="9" fill="#f08a18"/><ellipse cx="8" cy="6" rx="7" ry="3.500" fill="#cfe2f6"/><ellipse cx="17" cy="20" rx="6.500" ry="3.500" fill="#d8e8f8"/>`,
  win: `<path d="M1 1h10.300v10.300H1z" fill="#2fc0f4"/><path d="M12.700 1H23v10.300H12.700z" fill="#20a8ea"/><path d="M1 12.700h10.300V23H1z" fill="#0f86d8"/><path d="M12.700 12.700H23V23H12.700z" fill="#0a70c8"/>`,
  magnify: `<circle cx="10" cy="10" r="7.500" fill="none" stroke="#222" stroke-width="2.400"/><path d="M15.500 15.500L22 22" stroke="#222" stroke-width="2.600"/>`,
  beach: `<path d="M0 24C6 18 16 16 22 18l-6 6z" fill="#2f9ae8"/><path d="M14 24c8-7 18-9 34-7v7z" fill="#f6dc9c"/><path d="M24 19c1-5 0-9-1-12M34 17c0-3 0-5-1-8" stroke="#6a4a18" stroke-width="1.500" fill="none"/><path d="M23 7c-6-3-10 0-11 2 4-2 8-2 11-2 5-3 9-1 11 2-4-1-8-2-11 0zM33 8c2-3 6-3 8 0-3-1-5 0-8 0z" fill="#2e9a3c"/><path d="M36 18c3-3 7-3 12-2l-2 5z" fill="#9ab83c"/>`,
  copilot: `<defs><linearGradient id="c" x1="0" y1="0" x2="1" y2="1"><stop offset="0" stop-color="#2aa8f0"/><stop offset=".5" stop-color="#8a6ae8"/><stop offset="1" stop-color="#f060b0"/></linearGradient></defs><path d="M5 16L9 4c1-3 8-3 9 0l4 8c1 3-1 6-4 6h-9c-3 2-5 0-4-2z" fill="url(#c)"/><path d="M11 8h5l2 5h-5z" fill="#e8d8f8" opacity=".5"/><rect x="4" y="15" width="20" height="8" rx="1.500" fill="#ffb900"/>` + T(14, 22, 7, '#111', 'PRE'),
  taskview: `<rect x="8" y="1" width="15" height="15" rx="1" fill="#f4f4f4"/><rect x="1" y="7" width="15" height="15" rx="1" fill="#222"/><path d="M8 7h8v9H8z" fill="#c8c8c8"/>`,
  edge: `<defs><linearGradient id="e1" x1="0" y1="0" x2="1" y2="1"><stop offset="0" stop-color="#1fc8a0"/><stop offset="1" stop-color="#0a70c8"/></linearGradient></defs><circle cx="12" cy="12" r="11.500" fill="url(#e1)"/><path d="M2 13C2 6 10 3 15 6c4 2 5 6 3 8-2 1-6 1-7-1 0-1 1-2 1-3-4 0-7 4-5 8 2 3 8 5 13 3-3 3-8 3-11 2-5-1-7-6-7-10z" fill="#0b5fb8"/><path d="M12 10c1 4 5 6 11 3 0-6-3-10-8-11-5 0-10 3-12 8 3-2 6-2 9 0z" fill="#3ed8a0" opacity=".85"/>`,
  chrome: `<circle cx="12" cy="12" r="11.500" fill="#e8453c"/><path d="M12 12L1.500 6.500A11.500 11.500 0 0 0 12 23.500z" fill="#34a853"/><path d="M12 6.500h10A11.500 11.500 0 0 1 9.500 23.200L12 12z" fill="#fbbc04"/><circle cx="12" cy="12" r="5.200" fill="#fff"/><circle cx="12" cy="12" r="4" fill="#4285f4"/>`,
  steam: `<defs><linearGradient id="s" x1="0" y1="0" x2="0" y2="1"><stop offset="0" stop-color="#1a2a50"/><stop offset="1" stop-color="#0a5a9a"/></linearGradient></defs><circle cx="12" cy="12" r="11.500" fill="url(#s)"/><circle cx="15.500" cy="9" r="4" fill="none" stroke="#fff" stroke-width="1.600"/><circle cx="15.500" cy="9" r="2" fill="#fff"/><path d="M1 13l7 3 4-5 3 3-5 3c-2 3-6 2-7 0z" fill="#fff"/>`,
  excel: `<path d="M7 1h15a1 1 0 0 1 1 1v20a1 1 0 0 1-1 1H7z" fill="#21a366"/><path d="M7 12h16v5H7z" fill="#107c41"/><path d="M15 1h8v6h-8z" fill="#33c481"/><path d="M7 17h16v5a1 1 0 0 1-1 1H7z" fill="#185c37"/><rect x="1" y="6" width="12" height="12" rx="1" fill="#107c41"/>` + T(7, 16, 10, '#fff', 'X'),
  word: `<path d="M7 1h15a1 1 0 0 1 1 1v20a1 1 0 0 1-1 1H7z" fill="#2b7cd3"/><path d="M7 1h16v6H7z" fill="#41a5ee"/><path d="M7 12h16v6H7z" fill="#185abd"/><path d="M7 18h16v5H7z" fill="#103f91"/><rect x="1" y="6" width="12" height="12" rx="1" fill="#185abd"/>` + T(7, 16, 10, '#fff', 'W'),
  ppt: `<circle cx="13" cy="12" r="11" fill="#ff8f6b"/><path d="M13 1a11 11 0 0 0-11 11h11z" fill="#ed6c47"/><path d="M2 12a11 11 0 0 0 11 11V12z" fill="#d35230"/><rect x="1" y="6" width="12" height="12" rx="1" fill="#c43e1c"/>` + T(7, 16, 10, '#fff', 'P'),
  qqmusic: `<circle cx="12" cy="12" r="11.500" fill="#f8d818"/><path d="M11 4c1 4 6 4 6 8-1-2-3-2-4-2v8c0 3-6 3-6 0s3-3 4-2z" fill="#18b878"/>`,
  record: `<circle cx="12" cy="12" r="11.500" fill="#111"/><circle cx="12" cy="12" r="10" fill="none" stroke="#eee" stroke-width="1"/><circle cx="12" cy="12" r="7" fill="#e81818"/>`,
  globe: `<circle cx="13" cy="14" r="9.500" fill="#2a8ae8"/><path d="M5 13c5-3 10 2 16-1-1 5-3 9-8 10-5 0-7-4-8-9z" fill="#1058b8"/><path d="M0 20c9 4 20-3 24-12-2 8-15 18-24 12z" fill="#f0b020"/><path d="M6 0l10 2-4 9z" fill="#d81838"/>`,
  player: `<path d="M1 3h22v21H1z" fill="#f8d018" rx="2"/><circle cx="10" cy="10" r="6" fill="#fff"/><path d="M8 7l6 3-6 3z" fill="#f8d018"/><path d="M16 2V13M21-2V11" stroke="#584808" stroke-width="3.600" opacity=".35"/><path d="M16 2V13M21-2V11" stroke="#f8d018" stroke-width="2.400"/>` + T(12, 22, 6.500, '#222', 'Player'),
  tencentM: `<rect x="0" y="0" width="24" height="24" rx="6" fill="#1a8cff"/><path d="M4 17l3-9c1-2 3-1 3 1l.5 4 3-5c1-2 3-1 3 1l-.5 8h-3l.5-5-3 5h-2l-1-5-1.500 5z" fill="#fff"/><circle cx="19.500" cy="15" r="2.500" fill="#fff"/>`,
  avatar: `<circle cx="12" cy="12" r="12" fill="#a8a8b0"/><circle cx="12" cy="12" r="9.500" fill="#f2ece4"/><circle cx="9" cy="10" r="1.200" fill="#222"/><circle cx="15" cy="10" r="1.200" fill="#222"/><path d="M5 6l3 2M19 6l-3 2M8 16c2 2 6 2 8 0M6 20l12-1" stroke="#444" fill="none"/>`,
  wechat: `<ellipse cx="9" cy="9" rx="9" ry="8" fill="#28c445"/><circle cx="6" cy="7" r="1.200" fill="#186a28"/><circle cx="12" cy="7" r="1.200" fill="#186a28"/><ellipse cx="16.500" cy="15" rx="7.500" ry="6.500" fill="#f0f0f0"/><circle cx="14" cy="14" r="1" fill="#999"/><circle cx="19" cy="14" r="1" fill="#999"/>`,
  snip: `<rect x="1" y="1" width="18" height="21" rx="2" fill="#f4f4f4"/><path d="M4 4h7v3H4zM4 8h3v3H4zM4 12h3v3H4zM8 4h3v3H8z" fill="#e04020"/><path d="M13 3v21" stroke="#666"/><circle cx="19" cy="19" r="3" fill="none" stroke="#1a8ae8" stroke-width="1.500"/><path d="M14 24l3-3" stroke="#1a8ae8" stroke-width="2"/>`,
  wifi: `<path d="M1 9a16 16 0 0 1 22 0M5 13a11 11 0 0 1 14 0M8 17a6 6 0 0 1 8 0" fill="none" stroke="#222" stroke-width="1.600"/><circle cx="12" cy="20" r="1.600" fill="#222"/>`,
  speaker: `<path d="M2 9h4l6-5v16l-6-5H2z" fill="none" stroke="#222" stroke-width="1.500"/><path d="M15 8a5 5 0 0 1 0 8M18 5a9 9 0 0 1 0 14M21 3a12 12 0 0 1 0 18" fill="none" stroke="#222" stroke-width="1.300"/>`,
  bell: `<path d="M4 18c2-2 2-4 2-8a6 6 0 0 1 12 0c0 4 0 6 2 8zM10 20a2 2 0 0 0 4 0" fill="none" stroke="#222" stroke-width="1.500"/>`,
  chevTray: `<path d="M5 15l7-7 7 7" fill="none" stroke="#111" stroke-width="2.200"/>`
};

class NxIcon extends HTMLElement {
  connectedCallback() {
    const size = this.getAttribute('size') || 20;
    const body = ICONS[this.getAttribute('name')] || '';
    this.attachShadow({ mode: 'open' }).innerHTML = `
      <style>:host { display: inline-flex; flex: none; width: ${size}px; height: ${size}px; } svg { display: block; overflow: visible; }</style>
      <svg width="${size}" height="${size}" viewBox="0 0 24 24">${body}</svg>`;
  }
}

// lays a list of items in a flex row, each one reached from the last by a margin, from its center x
const placed = (list, start = 0) => {
  let prev = start;
  return list.map(it => {
    const [cx, kind, opt = {}] = it;
    const w = opt.w || (kind === 'sep' ? 1 : kind === 'caret' ? 8 : 20);
    const ml = cx - w / 2 - prev;
    prev = cx + w / 2;
    if (kind === 'sep') return `<i class="sep" style="margin-left:${ml}px"></i>`;
    if (kind === 'caret') return `<i class="caret" style="margin-left:${ml}px"></i>`;
    const cls = opt.hl ? 'hl' : '';
    return `<span class="it ${cls}" style="margin-left:${ml}px;width:${w}px"><nx-icon name="${kind}" size="${opt.s || w}"></nx-icon></span>`;
  }).join('');
};
const placedCss = `
  .it { display: inline-flex; align-items: center; justify-content: center; flex: none; height: 24px; box-sizing: border-box; }
  .it.hl { background: #fdd08a; border: 1px solid #c9a35e; border-radius: 3px; }
  .sep { flex: none; width: 1px; height: 20px; background: #b6c2d0; box-shadow: 1px 0 #fff; }
  .caret { flex: none; width: 0; height: 0; border: 4px solid transparent; border-top: 4px solid #222; border-bottom: 0; }
`;

class NxApp extends HTMLElement {
  connectedCallback() {
    this.attachShadow({ mode: 'open' }).innerHTML = `
      <style>:host { display: grid; grid-template-rows: 27px 29px 97px 33px 644px 22px 47px; width: 1436px; height: 899px; overflow: hidden; }</style>
      <slot></slot>`;
  }
}

class NxTitlebar extends HTMLElement {
  connectedCallback() {
    const qat = [
      [10, 'logo', { w: 22 }], [33, 'save', { w: 16 }], [47, 'sep'], [62, 'undo', { w: 18 }], [80, 'caret'], [97, 'redo', { w: 18 }], [111, 'sep'],
      [126, 'cut', { w: 16 }], [150, 'copy', { w: 16 }], [172, 'paste', { w: 18 }], [195, 'target', { w: 18 }], [209, 'sep'], [224, 'csysBox', { w: 16 }], [242, 'caret'], [251, 'sep'],
      [265, 'eraser', { w: 16 }], [279, 'sep'], [293, 'switchWin', { w: 16 }]
    ];
    this.attachShadow({ mode: 'open' }).innerHTML = `
      <style>
        :host { display: flex; align-items: center; background: #fff; height: 27px; color: #333; }
        ${placedCss}
        .qat { display: flex; align-items: center; flex: none; width: 768px; }
        .t { flex: none; }
        .small { margin-left: 5px; color: #3a4f68; }
        .title { flex: none; width: 438px; color: #222; font-size: 12.5px; }
        .siemens { flex: none; width: 94px; color: #0a9a9a; font: 700 12.5px "Liberation Sans", sans-serif; letter-spacing: .7px; margin-top: 3px; }
        .ctl { flex: none; width: 45px; display: flex; justify-content: center; }
        svg { display: block; }
      </style>
      <div class="qat">${placed(qat)}
        <span class="t small">切换窗口</span>
        <span class="it" style="margin-left:8px;width:16px"><nx-icon name="winBox" size="16"></nx-icon></span>
        <span class="t small" style="margin-left:4px">窗口</span>
        <i class="caret" style="margin-left:4px"></i>
        <i class="caret" style="margin-left:3px;border-top-color:#444"></i>
        <i class="sep" style="margin-left:2px;height:11px"></i>
      </div>
      <div class="title">NX 12.0.2.9 - 建模</div>
      <div class="siemens">SIEMENS</div>
      <div class="ctl" style="margin-left:-2px"><svg width="12" height="12"><path d="M1 6h10" stroke="#999"/></svg></div>
      <div class="ctl"><svg width="12" height="12"><path d="M1.500 3.500h7v7h-7zM3.500 3.500v-2h7v7h-2" fill="none" stroke="#999"/></svg></div>
      <div class="ctl"><svg width="12" height="12"><path d="M1 1l10 10M11 1L1 11" stroke="#999"/></svg></div>`;
  }
}

class NxTabs extends HTMLElement {
  connectedCallback() {
    const names = ['装配', '曲线', '曲面', '分析', '视图', '渲染', '工具', '应用模块', '内部', '注塑模向导'];
    this.attachShadow({ mode: 'open' }).innerHTML = `
      <style>
        :host { display: flex; height: 29px; box-sizing: border-box; background: #dce6f3; border-bottom: 1px solid #b6c6d9; color: #24405f; line-height: 16px; }
        .file { flex: none; width: 74px; height: 27px; margin-top: 1px; box-sizing: border-box; padding-top: 5px; padding-left: 15px; color: #dfe9f5;
          background: linear-gradient(#5d99d2, #3f7fc0 45%, #1e62a8 50%, #3a80c4 80%, #7ab2e4); border-radius: 0 3px 0 0; }
        .active { flex: none; width: 45px; margin-left: 6px; height: 29px; box-sizing: border-box; padding: 6px 0 0 10px; background: linear-gradient(#fdfefe, #f3f7fb);
          border: 1px solid #c0cfe0; border-bottom: 0; border-radius: 3px 3px 0 0; color: #1c3350; }
        .list { display: flex; gap: 26px; margin-left: 15px; padding-top: 7px; }
        .list span { white-space: nowrap; }
        .right { margin-left: auto; display: flex; align-items: center; }
        .search { width: 144px; height: 24px; box-sizing: border-box; border: 1px solid #a9b4c0; background: #fff; color: #111; display: flex; align-items: center; justify-content: space-between; padding: 0 4px 0 3px; }
        .ic { flex: none; display: flex; justify-content: center; }
      </style>
      <div class="file">文件(F)</div>
      <div class="active">主页</div>
      <div class="list">${names.map(n => `<span>${n}</span>`).join('')}</div>
      <div class="right">
        <div class="search"><span>阵列</span><nx-icon name="search" size="16"></nx-icon></div>
        <div class="ic" style="width:34px"><nx-icon name="restore" size="16"></nx-icon></div>
        <div class="ic" style="width:20px"><nx-icon name="chevUp" size="15"></nx-icon></div>
        <div class="ic" style="width:31px"><nx-icon name="help" size="14"></nx-icon></div>
      </div>`;
  }
}

class NxRibbon extends HTMLElement {
  connectedCallback() {
    this.attachShadow({ mode: 'open' }).innerHTML = `
      <style>
        :host { display: flex; height: 97px; position: relative; box-sizing: border-box; border-bottom: 1px solid #b6c6d9; background: linear-gradient(#f7f9fd, #e6edf6 62%, #dbe5f1); }
        .end { position: absolute; right: 5px; bottom: 7px; width: 0; height: 0; border: 4px solid transparent; border-top-color: #44586e; border-bottom: 0; }
      </style>
      <slot></slot><i class="end"></i>`;
  }
}

class NxGroup extends HTMLElement {
  connectedCallback() {
    const w = this.getAttribute('w');
    const pad = this.getAttribute('pad') || 0;
    const left = this.hasAttribute('left');
    const none = this.hasAttribute('nolabel');
    const narrow = this.hasAttribute('narrow');
    this.attachShadow({ mode: 'open' }).innerHTML = `
      <style>
        :host { display: flex; flex-direction: column; flex: none; width: ${w}px; box-sizing: border-box; height: 92px; border-right: 1px solid #c4d0df; box-shadow: 1px 0 #f6f9fd; margin-top: 4px; }
        .body { display: flex; height: 76px; margin-top: -4px; padding-left: ${pad}px; }
        .foot { display: flex; align-items: center; height: 20px; color: #5f7892; }
        .label { flex: 1; min-width: 0; white-space: nowrap; text-align: ${left ? 'left' : 'center'}; padding-left: ${left ? 1 : 0}px; }
        .more { flex: none; width: ${narrow ? 14 : 18}px; display: flex; justify-content: center; }
        .more i { width: 0; height: 0; border: 3.500px solid transparent; border-top: 4px solid #53677e; border-bottom: 0; }
      </style>
      <div class="body"><slot></slot></div>
      ${none ? '' : `<div class="foot"><div class="label">${this.getAttribute('label')}</div><div class="more"><i></i></div></div>`}`;
  }
}

class NxBig extends HTMLElement {
  connectedCallback() {
    const boxed = this.hasAttribute('boxed');
    this.attachShadow({ mode: 'open' }).innerHTML = `
      <style>
        :host { display: flex; flex-direction: column; align-items: center; flex: none; width: ${this.getAttribute('w')}px; margin-left: ${this.getAttribute('gapl') || 0}px; color: #24405f; }
        .wrap { display: flex; align-items: center; justify-content: center; box-sizing: border-box; width: 100%; margin-top: ${boxed ? 4 : 6}px; height: ${boxed ? 35 : 30}px; ${boxed ? 'border: 1px solid #bdc8d6; border-radius: 3px; background: linear-gradient(#f2f5f9, #e9eef5);' : ''} }
        .lab { margin-top: ${boxed ? 3 : 6}px; line-height: 16px; white-space: nowrap; }
        i { margin-top: 5px; width: 0; height: 0; border: 3.500px solid transparent; border-top: 4px solid #222; border-bottom: 0; }
      </style>
      <div class="wrap"><nx-icon name="${this.getAttribute('icon')}" size="${boxed ? 20 : 30}"></nx-icon></div>
      <div class="lab">${this.getAttribute('label')}</div>
      ${this.hasAttribute('caret') ? '<i></i>' : ''}`;
  }
}

class NxGallery extends HTMLElement {
  connectedCallback() {
    this.attachShadow({ mode: 'open' }).innerHTML = `
      <style>
        :host { display: flex; flex: none; margin: 5px 0 0 2px; width: 51px; height: 69px; box-sizing: border-box; border: 1px solid #b9c8da; background: #f4f7fb; }
        .cells { flex: none; width: 33px; display: flex; flex-direction: column; align-items: center; justify-content: space-around; border-right: 1px solid #c3d0df; }
        .btns { flex: 1; display: flex; flex-direction: column; }
        .btns div { flex: 1; display: flex; align-items: center; justify-content: center; background: linear-gradient(#f4f7fb, #dde6f1); border-bottom: 1px solid #c3d0df; }
        .btns div:last-child { border: 0; }
        .up { width: 0; height: 0; border: 4px solid transparent; border-bottom: 4px solid #c4cddb; border-top: 0; }
        .dn { width: 0; height: 0; border: 3.500px solid transparent; border-top: 4px solid #6f7f93; border-bottom: 0; }
        .ln { width: 7px; border-top: 1px solid #6f7f93; padding-top: 2px; display: flex; justify-content: center; }
      </style>
      <div class="cells"><nx-icon name="curve" size="26"></nx-icon><nx-icon name="rect" size="26"></nx-icon></div>
      <div class="btns"><div><i class="up"></i></div><div><i class="dn"></i></div><div><span class="ln"><i class="dn"></i></span></div></div>`;
  }
}

class NxStack extends HTMLElement {
  connectedCallback() {
    const rowh = this.getAttribute('rowh') || 23;
    this.attachShadow({ mode: 'open' }).innerHTML = `
      <style>
        :host { display: grid; grid-auto-rows: ${rowh}px; flex: none; align-self: flex-start; width: ${this.getAttribute('w')}px; margin-left: ${this.getAttribute('gapl') || 0}px; margin-top: ${this.getAttribute('top') || 2}px; }
      </style>
      <slot></slot>`;
  }
}

class NxTool extends HTMLElement {
  connectedCallback() {
    const label = this.getAttribute('label');
    const caret = this.hasAttribute('caret');
    const hl = this.hasAttribute('hl');
    const big = this.hasAttribute('big');
    this.attachShadow({ mode: 'open' }).innerHTML = `
      <style>
        :host { display: flex; align-items: center; ${label ? 'justify-content: flex-start; padding-left: 3px;' : 'justify-content: center;'} color: #24405f; white-space: nowrap; box-sizing: border-box;
          ${hl ? 'width: 62px; height: 22px; background: #cfe3f5; border: 1px solid #b3d3ee; border-radius: 2px; padding-left: 2px;' : ''} }
        .l { margin-left: 4px; }
        i { margin-left: 7px; width: 0; height: 0; border: 4px solid transparent; border-top: 4px solid #222; border-bottom: 0; }
        b { width: 1px; height: 100%; margin-left: 5px; background: #b3d3ee; }
        b + i { margin-left: 2px; }
      </style>
      <nx-icon name="${this.getAttribute('icon')}" size="${big ? 28 : label ? 16 : 18}"></nx-icon>
      ${label ? `<span class="l">${label}</span>` : ''}
      ${hl ? '<b></b>' : ''}${caret ? '<i></i>' : ''}`;
  }
}

class NxRows extends HTMLElement {
  connectedCallback() {
    const cell = +(this.getAttribute('cell') || 24);
    const sepw = +(this.getAttribute('sep') || 4);
    const row = s => `<div class="row">${s.split(' ').map(n => n === '|'
      ? `<span class="vs" style="width:${sepw}px"><i></i></span>`
      : `<span class="c" style="width:${cell}px"><nx-icon name="${n}" size="${n.startsWith('fit') || n.startsWith('dim') ? 23 : 21}"></nx-icon></span>`).join('')}</div>`;
    this.attachShadow({ mode: 'open' }).innerHTML = `
      <style>
        :host { display: flex; flex-direction: column; gap: 6px; padding: 9px 0 0 ${this.getAttribute('pad') || 0}px; }
        .row { display: flex; height: 24px; align-items: center; }
        .c { display: flex; justify-content: center; flex: none; }
        .vs { display: flex; justify-content: center; flex: none; }
        .vs i { width: 1px; height: 22px; background: #bcc8d6; box-shadow: 1px 0 #fff; }
      </style>
      ${row(this.getAttribute('a'))}${row(this.getAttribute('b'))}`;
  }
}

class NxSelbar extends HTMLElement {
  connectedCallback() {
    const left = [[428, 'selA'], [453, 'selB'], [475, 'selC', { w: 17 }], [492, 'caret'], [513, 'selD'], [535, 'selE'], [562, 'selF'], [586, 'selG'], [604, 'caret'], [624, 'selH'], [648, 'selI'],
      [675, 'snapA', { w: 23, s: 20, hl: 1 }], [699.5, 'snapB', { w: 23, s: 18, hl: 1 }], [724, 'snapC', { w: 23, s: 18, hl: 1 }], [748, 'snapD', { s: 18 }], [774, 'snapE', { w: 23, s: 18, hl: 1 }], [798, 'snapF', { w: 23, s: 18, hl: 1 }],
      [824, 'snapG', { s: 18 }], [849, 'snapH', { w: 23, s: 18, hl: 1 }], [874, 'snapI', { s: 18 }], [899, 'snapJ', { w: 23, s: 18, hl: 1 }], [924, 'snapK', { w: 23, s: 18, hl: 1 }], [948, 'snapL', { s: 18 }],
      [973, 'snapM', { s: 18 }], [998, 'snapN', { s: 18 }], [1018, 'sep'], [1038, 'viewA', { s: 18 }], [1062, 'viewB', { s: 18 }], [1087, 'viewC', { s: 18 }], [1113, 'viewD', { s: 18 }], [1136, 'viewE', { s: 18 }],
      [1163, 'viewF', { s: 16 }], [1181, 'caret'], [1199, 'viewG', { s: 18 }], [1217, 'caret'], [1237, 'viewH', { s: 18 }], [1255, 'caret'], [1272, 'viewI', { s: 18 }], [1291, 'caret'], [1305, 'sep']];
    this.attachShadow({ mode: 'open' }).innerHTML = `
      <style>
        :host { display: flex; align-items: center; height: 33px; box-sizing: border-box; background: #dae5f2; border-top: 1px solid #eef3f9; position: relative; color: #24405f; padding-bottom: 2px; }
        ${placedCss}
        .menu { display: flex; align-items: center; flex: none; width: 87px; padding-left: 7px; box-sizing: border-box; }
        .menu span { margin-left: 3px; white-space: nowrap; }
        .menu i { margin-left: 6px; width: 0; height: 0; border: 3px solid transparent; border-top: 4px solid #44586e; border-bottom: 0; }
        .combo { flex: none; box-sizing: border-box; height: 23px; background: #fff; border: 1px solid #a9a9a9; border-radius: 2px; color: #111; display: flex; align-items: center; justify-content: space-between; padding: 0 7px 0 2px; }
        .end { position: absolute; right: 5px; bottom: 8px; width: 0; height: 0; border: 3.500px solid transparent; border-top: 4px solid #44586e; border-bottom: 0; }
        svg { display: block; }
      </style>
      <div class="menu"><nx-icon name="menu" size="15"></nx-icon><span>菜单(M)</span><i></i></div>
      <i class="sep" style="margin-right:11px"></i>
      <div class="combo" style="width:148px">无选择过滤器<svg width="9" height="6"><path d="M.5 .5l4 4 4-4" fill="none" stroke="#555"/></svg></div>
      <div class="combo" style="width:156px;margin-left:9px">整个装配<svg width="9" height="6"><path d="M.5 .5l4 4 4-4" fill="none" stroke="#555"/></svg></div>
      ${placed(left, 412)}
      <i class="end"></i>`;
  }
}

class NxWorkspace extends HTMLElement {
  connectedCallback() {
    this.attachShadow({ mode: 'open' }).innerHTML = `
      <style>:host { display: flex; height: 644px; }</style><slot></slot>`;
  }
}

class NxResbar extends HTMLElement {
  connectedCallback() {
    const tabs = [['resAsm', 230, 41], ['resCon', 272, 40], ['resPart', 313, 44, 1], ['resBooks', 358, 40], ['resEye', 398, 41], ['resLayers', 440, 41],
      ['resInfo', 494, 41], ['resDoc', 548, 41], ['resClock', 602, 41], ['resRainbow', 644, 41], ['resTool', 685, 41], ['resRobot', 727, 41]];
    let y = 215;
    const html = tabs.map(([n, top, h, active]) => {
      const mt = top - y;
      y = top + h;
      return `<div class="tab${active ? ' on' : ''}" style="margin-top:${mt}px;height:${h}px"><nx-icon name="${n}" size="26"></nx-icon></div>`;
    }).join('');
    this.attachShadow({ mode: 'open' }).innerHTML = `
      <style>
        :host { display: block; flex: none; width: 29px; height: 644px; background: #b9c6d8; }
        .gear { height: 29px; display: flex; align-items: center; justify-content: center; padding-right: 4px; }
        .tab { box-sizing: border-box; width: 28px; margin-left: 1px; background: #fafafe; border-bottom: 1px solid #c4cedb; display: flex; align-items: center; justify-content: center; }
        .tab.on { background: #dbe5f3; width: 29px; }
      </style>
      <div class="gear"><nx-icon name="gear" size="15"></nx-icon></div>
      <div class="tabs">${html}</div>`;
  }
}

class NxNavigator extends HTMLElement {
  connectedCallback() {
    this.attachShadow({ mode: 'open' }).innerHTML = `
      <style>
        :host { display: flex; flex-direction: column; flex: none; width: 241px; height: 644px; box-sizing: border-box; background: #d8e3f2; padding: 0 11px 0 7px; color: #1d2c3f; border-top: 1px solid #f2f6fb; }
        .head { display: flex; align-items: center; justify-content: space-between; height: 38px; padding: 9px 4px 0 4px; box-sizing: border-box; }
        .win { width: 12px; height: 9px; border: 1.500px solid #222; border-top-width: 2px; margin-right: 0; }
        .box { flex: none; height: 590px; box-sizing: border-box; width: 224px; margin-left: -1px; border: 1px solid #a5adba; background: #fff; display: flex; flex-direction: column; color: #111; }
        .cols { flex: none; display: flex; align-items: center; height: 21px; }
        .name { flex: none; width: 200px; box-sizing: border-box; padding-left: 6px; display: flex; align-items: center; gap: 10px; border-right: 1px solid #dcdcdc; height: 21px; }
        .name i { width: 0; height: 0; border: 3.500px solid transparent; border-bottom: 4px solid #aaa; border-top: 0; }
        .last { flex: 1; overflow: hidden; padding-left: 6px; white-space: nowrap; color: #333; }
        .rows { flex: 1; padding-top: 0; }
        .hsb { flex: none; height: 15px; margin: 0 1px 1px; background: #eee; display: flex; align-items: center; padding-left: 17px; }
        .hsb i { width: 102px; height: 2px; background: #888; }
        .grip { flex: 1; background: #deeaf8; margin: 0 -1px; display: flex; justify-content: center; padding-top: 4px; box-sizing: border-box; height: 14px; }
        .grip i { width: 72px; height: 2px; background: repeating-linear-gradient(90deg, #9aa7b6 0 2px, transparent 2px 5px); }
      </style>
      <div class="head"><span>部件导航器</span><i class="win"></i></div>
      <div class="box">
        <div class="cols"><div class="name">名称<i></i></div><div class="last">最</div></div>
        <div class="rows"><slot></slot></div>
        <div class="hsb"><i></i></div>
      </div>
      <div class="grip"><i></i></div>`;
  }
}

class NxTreeRow extends HTMLElement {
  connectedCallback() {
    const top = this.hasAttribute('top');
    const exp = this.getAttribute('exp');
    const dim = this.hasAttribute('dim');
    const last = this.hasAttribute('last');
    const pre = this.hasAttribute('pre');
    const first = this.hasAttribute('first');
    const closing = top && this.getAttribute('label') === '模型历史记录';
    const expander = exp ? `<span class="exp">${exp === '+' ? '<b></b><u></u>' : '<b></b>'}</span>` : '';
    this.attachShadow({ mode: 'open' }).innerHTML = `
      <style>
        :host { display: flex; align-items: center; height: 18px; white-space: nowrap; word-spacing: 2px; color: ${dim ? '#a6a6a6' : '#111'}; font-weight: ${this.hasAttribute('bold') ? 700 : 400}; }
        .ind { flex: none; position: relative; height: 18px; width: ${top ? 19 : 40}px; }
        .v { position: absolute; top: ${first ? 9 : 0}px; bottom: ${last || closing ? 9 : 0}px; left: ${top ? 9 : 29}px; border-left: 1px dotted #999; }
        .h { position: absolute; top: 9px; right: 0; left: ${top ? 9 : 29}px; border-top: 1px dotted #999; }
        .exp { position: absolute; z-index: 1; left: ${top ? 5 : 25}px; top: 5px; width: 7px; height: 7px; border: 1px solid #8a8a8a; background: #f2f2f2; }
        .exp b { position: absolute; left: 1px; top: 3px; width: 5px; height: 1px; background: #222; }
        .exp u { position: absolute; left: 3px; top: 1px; width: 1px; height: 5px; background: #222; }
        .cb { flex: none; width: 12px; height: 12px; border: 1px solid #111; background: #fff; display: flex; margin-right: 1px; }
        .l { margin-left: 3px; flex: 1; overflow: hidden; }
        .ok { flex: none; width: 18px; display: flex; justify-content: center; margin-left: auto; }
      </style>
      <span class="ind"><i class="v"></i><i class="h"></i>${expander}</span>
      ${pre ? '<nx-icon name="check" size="15" style="margin-left:1px"></nx-icon>' : ''}
      ${top ? '' : '<span class="cb"><nx-icon name="check" size="12"></nx-icon></span>'}
      <nx-icon name="${this.getAttribute('icon')}" size="16"></nx-icon>
      <span class="l">${this.getAttribute('label')}</span>
      ${top ? '' : '<span class="ok"><nx-icon name="check" size="16"></nx-icon></span>'}`;
  }
}

class NxMain extends HTMLElement {
  connectedCallback() {
    this.attachShadow({ mode: 'open' }).innerHTML = `
      <style>
        :host { display: flex; flex-direction: column; flex: 1; min-width: 0; height: 644px; }
        .docs { flex: none; display: flex; height: 21px; background: #d9e4f2; font-size: 12px; color: #1d2c3f; line-height: 21px; }
        .doc { flex: none; display: flex; align-items: center; box-sizing: border-box; height: 21px; white-space: nowrap; }
        .one { width: 139px; padding-left: 5px; }
        .two { width: 140px; padding-left: 6px; background: #4e9aa8; color: #eaf4f6; }
        .name { margin-left: 5px; }
        .x { color: #fff; font: 700 15px "Liberation Sans", sans-serif; margin-left: 7px; }
        .line { flex: none; height: 2px; background: #4e9aa8; }
      </style>
      <div class="docs">
        <div class="doc one"><nx-icon name="part" size="16"></nx-icon><span class="name">_model50.prt</span><nx-icon name="editDoc" size="10" style="margin-left:7px"></nx-icon></div>
        <div class="doc two"><nx-icon name="part" size="16"></nx-icon><span class="name">_model51.prt</span><nx-icon name="editDocW" size="11" style="margin-left:6px"></nx-icon><span class="x">×</span></div>
      </div>
      <div class="line"></div>
      <nx-viewport></nx-viewport>`;
  }
}

class NxViewport extends HTMLElement {
  connectedCallback() {
    this.attachShadow({ mode: 'open' }).innerHTML = `
      <style>
        :host { display: block; flex: 1; position: relative; background: #25262b; overflow: hidden; }
        svg { display: block; }
        .usb { position: absolute; right: 0; top: 378px; width: 27px; height: 41px; background: #0d0d0d; border-radius: 5px 0 0 5px; display: flex; align-items: center; justify-content: center; padding-left: 2px; box-sizing: border-box; }
        text { font-family: "Liberation Sans", sans-serif; }
      </style>
      <svg width="1166" height="621" viewBox="270 209 1166 621">
        <defs>
          <linearGradient id="gf" gradientUnits="userSpaceOnUse" x1="836" y1="308" x2="879" y2="283">
            <stop offset="0" stop-color="#a56600"/><stop offset=".12" stop-color="#cc8600"/><stop offset=".34" stop-color="#ffa400"/><stop offset=".58" stop-color="#ffc000"/><stop offset=".72" stop-color="#fff02a"/><stop offset=".82" stop-color="#ffcc00"/><stop offset=".92" stop-color="#c88000"/><stop offset="1" stop-color="#a06400"/>
          </linearGradient>
          <linearGradient id="gr" gradientUnits="userSpaceOnUse" x1="943" y1="284" x2="987" y2="308">
            <stop offset="0" stop-color="#ee8e00"/><stop offset=".3" stop-color="#ff9c00"/><stop offset=".55" stop-color="#f09200"/><stop offset=".78" stop-color="#bb7400"/><stop offset="1" stop-color="#a86800"/>
          </linearGradient>
          <linearGradient id="gh" x1="0" y1="0" x2="0" y2="1">
            <stop offset="0" stop-color="#c88800"/><stop offset=".03" stop-color="#ffcc00"/><stop offset=".28" stop-color="#ffd000"/><stop offset=".45" stop-color="#ffb400"/><stop offset=".6" stop-color="#ff9c00"/><stop offset=".75" stop-color="#c47a00"/><stop offset=".9" stop-color="#764a00"/><stop offset="1" stop-color="#5c3800"/>
          </linearGradient>
          <clipPath id="front"><rect x="800" y="270" width="260" height="260"/></clipPath>
        </defs>
        <path id="rising" d="M943 284A25 7 30 0 1 987 308L738 739A25 7 30 0 1 694 714Z" fill="url(#gr)"/>
        <path d="M664 608H1160A5 25.700 0 0 1 1160 659.500H664A5 25.700 0 0 1 664 608Z" fill="url(#gh)"/>
        <ellipse cx="663" cy="633.800" rx="5" ry="25.500" fill="#b87800" stroke="#5a3c10" stroke-width=".8"/>
        <path d="M836 308A25 7 -30 0 1 879 283L1128 713A25 7 -30 0 1 1083 739Z" fill="url(#gf)"/>
        <ellipse cx="1105.500" cy="726" rx="25.500" ry="7" transform="rotate(-30 1105.500 726)" fill="#7e4e00" stroke="#5a3c10" stroke-width=".6"/>
        <g clip-path="url(#front)">
          <path d="M943 284A25 7 30 0 1 987 308L738 739A25 7 30 0 1 694 714Z" fill="url(#gr)"/>
        </g>
        <ellipse cx="965" cy="296" rx="25" ry="6.500" transform="rotate(30 965 296)" fill="#e89000" stroke="#5a4a30" stroke-width=".7"/>
        <rect x="322" y="752" width="22" height="22" fill="#a9a9a9"/>
        <path d="M322 774V745" stroke="#1f8a2e" stroke-width="1.500"/><path d="M322 739l2.500 11h-5z" fill="#1f8a2e"/>
        <path d="M322 774H352" stroke="#c83a3a" stroke-width="1.500"/><path d="M358 773.500l-12 2.500v-5z" fill="#c82a2a"/>
        <text x="322" y="737" font-size="12" fill="#2a9a3a" text-anchor="middle">Y</text>
        <text x="363" y="777" font-size="13" fill="#c83030" text-anchor="middle">X</text>
        <circle cx="322" cy="774" r="4.500" fill="#fff" opacity=".8"/><circle cx="322" cy="774" r="3" fill="#1030d8"/>
      </svg>
      <div class="usb"><nx-icon name="usb" size="20"></nx-icon></div>`;
  }
}

class NxStatus extends HTMLElement {
  connectedCallback() {
    this.attachShadow({ mode: 'open' }).innerHTML = `
      <style>
        :host { display: flex; height: 22px; box-sizing: border-box; background: linear-gradient(#e0e9f4, #c6d5e8); border-top: 1px solid #f4f7fb; border-bottom: 1px solid #a8b4c2; color: #13304f; line-height: 19px; word-spacing: 2px; font-weight: 500; }
        div { flex: none; box-sizing: border-box; border-right: 1px solid #f2f5f9; box-shadow: 1px 0 #aab6c4; height: 20px; white-space: nowrap; }
        .ic { display: flex; align-items: center; gap: 4px; padding-left: 2px; }
      </style>
      <div style="width:660px">选择对象并使用 MB3，或者双击某一对象</div>
      <div style="width:663px"></div>
      <div style="width:20px"></div>
      <div class="ic" style="width:76px"><nx-icon name="checker" size="16" style="margin-left:1px"></nx-icon><nx-icon name="restore" size="16"></nx-icon></div>`;
  }
}

class NxTaskbar extends HTMLElement {
  connectedCallback() {
    const apps = [['copilot'], ['taskview'], ['edge'], ['chrome'], ['steam'], ['excel'], ['word'], ['ppt'], ['qqmusic', 1], ['record', 1], ['globe', 1], ['player', 2], ['tencentM', 1], ['avatar', 1], ['wechat', 1], ['snip', 1]];
    this.attachShadow({ mode: 'open' }).innerHTML = `
      <style>
        :host { display: flex; align-items: center; height: 47px; position: relative; color: #222; overflow: hidden;
          background:
            radial-gradient(ellipse 60px 34px at 985px 5px, rgba(28,36,28,.85), transparent 100%),
            radial-gradient(ellipse 50px 24px at 930px 8px, rgba(40,48,38,.7), transparent 100%),
            linear-gradient(160deg, #c4c0c0 0, #a8a4a4 20%, #8a8888 45%, #2a2a2c 60%, #262628 72%, transparent 86%) 0 0 / 190px 100% no-repeat,
            linear-gradient(90deg, #b9b6b8 0, #d8d2d4 200px, #cabfc3 400px, #b8aaae 560px, #c2b6ba 760px, #a89ca0 880px, #a39aa0 1060px, #ac9ea4 1220px, #9d909e 1436px); }
        .weather { flex: none; width: 170px; display: flex; align-items: center; padding-left: 17px; box-sizing: border-box; position: relative; }
        .badge { position: absolute; left: 27px; top: -6px; width: 16px; height: 16px; border-radius: 50%; background: #c4281c; color: #fff; font-size: 11px; line-height: 16px; text-align: center; }
        .wtxt { margin-left: 7px; line-height: 16px; color: #262626; }
        .start { flex: none; margin-left: 14px; display: flex; }
        .pill { flex: none; margin-left: 13px; width: 218px; height: 30px; border-radius: 15px; background: rgba(248,248,250,.82); display: flex; align-items: center; padding-left: 11px; box-sizing: border-box; color: #444; font-size: 14px; position: relative; }
        .pill span { margin-left: 9px; }
        .beach { position: absolute; right: 1px; bottom: 0; }
        .apps { display: flex; margin-left: 3px; flex: none; }
        .app { flex: none; width: 44px; height: 47px; display: flex; align-items: center; justify-content: center; position: relative; }
        .dot { position: absolute; left: 18px; bottom: 4px; width: 8px; height: 3px; border-radius: 2px; background: #5a5a5e; }
        .dot.long { left: 10px; width: 24px; background: #9a6412; }
        .tray { flex: none; display: flex; align-items: center; }
        .time { position: absolute; left: 1365px; top: 9px; line-height: 14px; font-size: 12px; color: #1c1c1c; }
        .mark { position: absolute; right: 4px; bottom: 3px; font: 15px "Noto Sans CJK SC", "Liberation Serif", serif; color: #f8f6f7; text-shadow: 0 0 1px #444; white-space: nowrap; }
      </style>
      <div class="weather"><nx-icon name="weather" size="24"></nx-icon><span class="badge">1</span>
        <div class="wtxt"><div>-6°C</div><div>局部晴朗</div></div></div>
      <div class="start"><nx-icon name="win" size="24"></nx-icon></div>
      <div class="pill"><nx-icon name="magnify" size="16"></nx-icon><span>搜索</span><svg class="beach" width="48" height="30" viewBox="0 0 48 24"><g>${ICONS.beach}</g></svg></div>
      <div class="apps">${apps.map(([n, d]) => `<div class="app"><nx-icon name="${n}" size="${n === 'taskview' ? 22 : 24}"></nx-icon>${d ? `<i class="dot${d === 2 ? ' long' : ''}"></i>` : ''}</div>`).join('')}</div>
      <div class="tray" style="margin-left:21.500px"><nx-icon name="chevTray" size="15"></nx-icon></div>
      <div class="tray" style="margin-left:17.500px;font-size:14px">英</div>
      <div class="tray" style="margin-left:24px;font-size:14px">拼</div>
      <div class="tray" style="margin-left:23px"><nx-icon name="wifi" size="16"></nx-icon></div>
      <div class="tray" style="margin-left:8px"><nx-icon name="speaker" size="16"></nx-icon></div>
      <div class="time">12:29</div>
      <div class="tray" style="position:absolute;left:1401px;top:10px"><nx-icon name="bell" size="16"></nx-icon></div>
      <div class="mark">UG爱好者论坛@领为喃喃</div>`;
  }
}

const tags = { 'nx-icon': NxIcon, 'nx-app': NxApp, 'nx-titlebar': NxTitlebar, 'nx-tabs': NxTabs, 'nx-ribbon': NxRibbon, 'nx-group': NxGroup, 'nx-big': NxBig, 'nx-gallery': NxGallery, 'nx-stack': NxStack, 'nx-tool': NxTool, 'nx-rows': NxRows, 'nx-selbar': NxSelbar, 'nx-workspace': NxWorkspace, 'nx-resbar': NxResbar, 'nx-navigator': NxNavigator, 'nx-tree-row': NxTreeRow, 'nx-main': NxMain, 'nx-viewport': NxViewport, 'nx-status': NxStatus, 'nx-taskbar': NxTaskbar };
for (const [name, cls] of Object.entries(tags)) customElements.define(name, cls);
</script>
</body>
</html>
